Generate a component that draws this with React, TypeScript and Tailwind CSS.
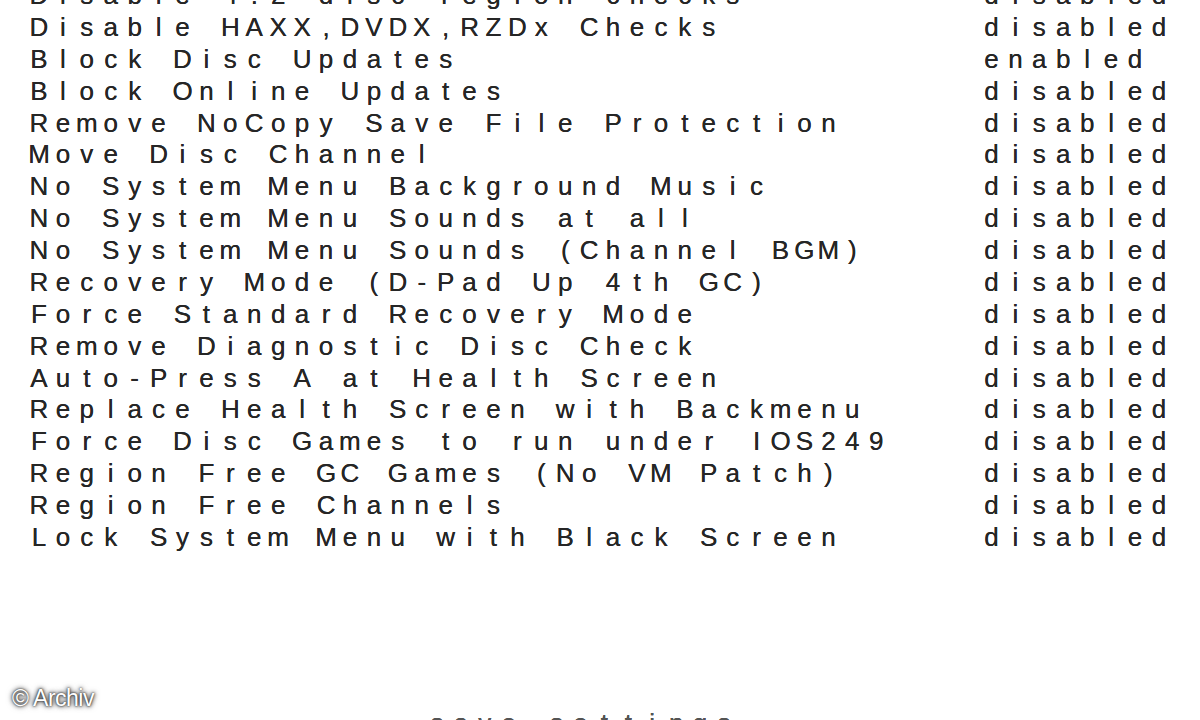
import clsx from "clsx";

// hack list: label on the left, state on the right
const hacks: [string, string][] = [
  ["Disable 4.2 disc region checks", "disabled"],
  ["Disable HAXX,DVDX,RZDx Checks", "disabled"],
  ["Block Disc Updates", "enabled"],
  ["Block Online Updates", "disabled"],
  ["Remove NoCopy Save File Protection", "disabled"],
  ["Move Disc Channel", "disabled"],
  ["No System Menu Background Music", "disabled"],
  ["No System Menu Sounds at all", "disabled"],
  ["No System Menu Sounds (Channel BGM)", "disabled"],
  ["Recovery Mode (D-Pad Up 4th GC)", "disabled"],
  ["Force Standard Recovery Mode", "disabled"],
  ["Remove Diagnostic Disc Check", "disabled"],
  ["Auto-Press A at Health Screen", "disabled"],
  ["Replace Health Screen with Backmenu", "disabled"],
  ["Force Disc Games to run under IOS249", "disabled"],
  ["Region Free GC Games (No VM Patch)", "disabled"],
  ["Region Free Channels", "disabled"],
  ["Lock System Menu with Black Screen", "disabled"],
];

// every glyph sits in its own fixed cell, like the console font
const Cells = ({ text, className }: { text: string; className?: string }) => (
  <div className={clsx("flex", className)}>
    {text.split("").map((ch, i) => (
      <span key={i} className="inline-block w-[23.93px] shrink-0 text-center">
        {ch === " " ? "\u00a0" : ch}
      </span>
    ))}
  </div>
);

export default function App() {
  return (
    <div className="relative h-[720px] w-[1200px] overflow-hidden bg-white text-[#262626]">
      <div
        className="-mt-[20px] flex flex-col text-[26px] leading-[31.875px] [text-shadow:0_0_0.6px_#262626]"
        style={{ fontFamily: '"Liberation Sans", Arial, sans-serif' }}
      >
        {hacks.map(([label, state]) => (
          <div key={label} className="flex pl-[27px]">
            <Cells text={label} className="w-[952.5px]" />
            <Cells text={state} />
          </div>
        ))}

        <div className="mt-[154px] flex pl-[425px] text-[#555]">
          <Cells text="save settings" />
        </div>
      </div>

      <div
        className="absolute bottom-[10px] left-[12px] text-[23px] leading-none tracking-[-0.5px] text-white"
        style={{
          fontFamily: '"Liberation Sans", Arial, sans-serif',
          textShadow: "0 0 2px #111, 0 0 4px #333, 0 0 6px #777",
        }}
      >
        © Archiv
      </div>
    </div>
  );
}
